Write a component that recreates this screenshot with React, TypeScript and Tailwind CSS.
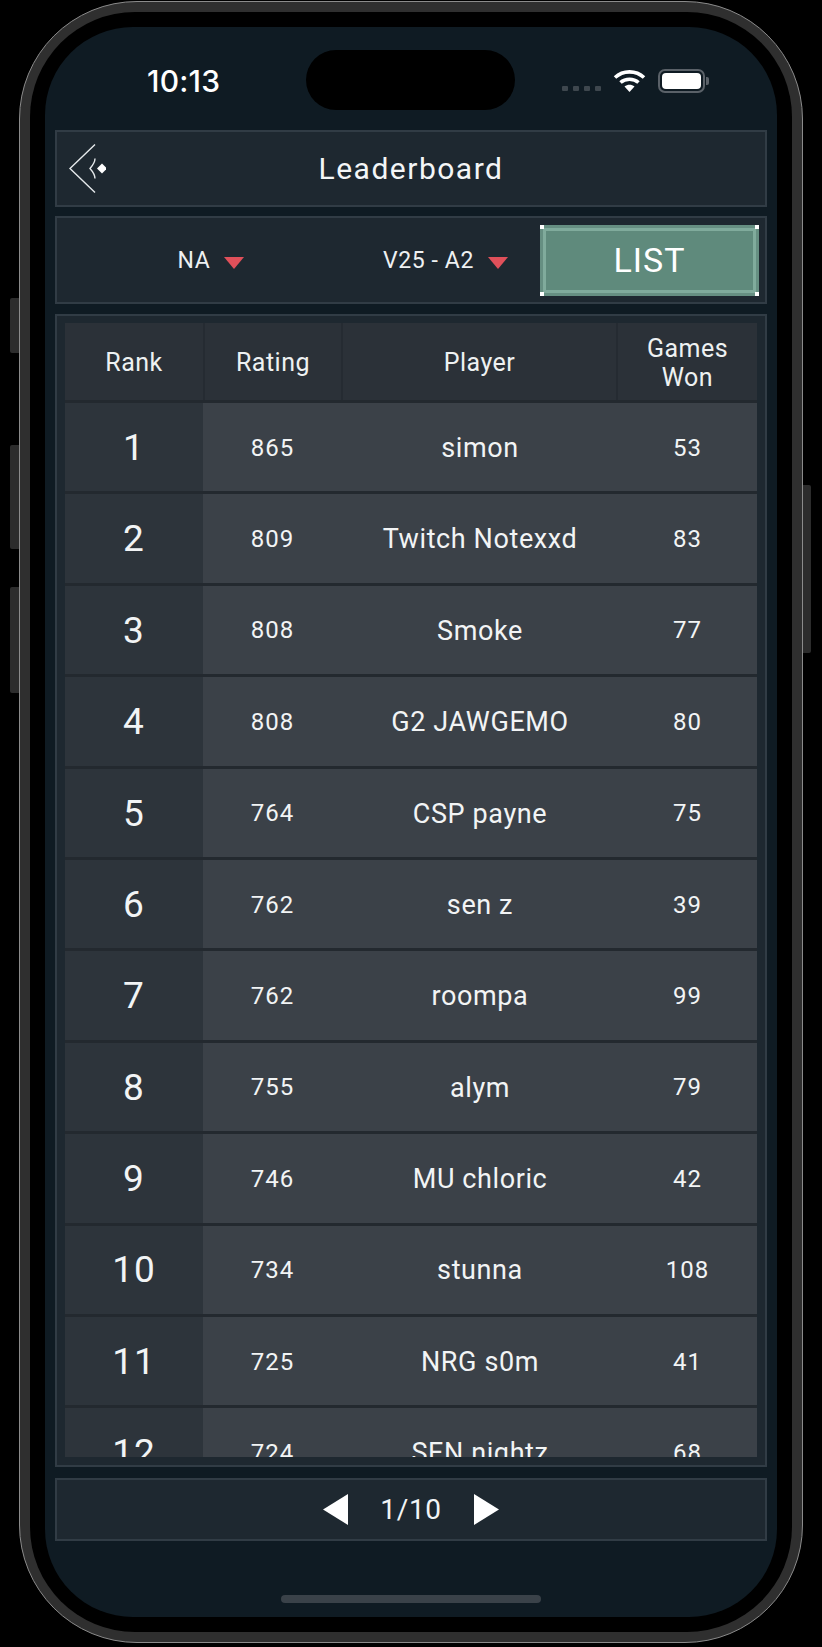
const players = [
  { rank: 1, rating: 865, name: "simon", won: 53 },
  { rank: 2, rating: 809, name: "Twitch Notexxd", won: 83 },
  { rank: 3, rating: 808, name: "Smoke", won: 77 },
  { rank: 4, rating: 808, name: "G2 JAWGEMO", won: 80 },
  { rank: 5, rating: 764, name: "CSP payne", won: 75 },
  { rank: 6, rating: 762, name: "sen z", won: 39 },
  { rank: 7, rating: 762, name: "roompa", won: 99 },
  { rank: 8, rating: 755, name: "alym", won: 79 },
  { rank: 9, rating: 746, name: "MU chloric", won: 42 },
  { rank: 10, rating: 734, name: "stunna", won: 108 },
  { rank: 11, rating: 725, name: "NRG s0m", won: 41 },
  { rank: 12, rating: 724, name: "SEN nightz", won: 68 },
];

const din = "font-['Roboto',sans-serif]";

function Caret() {
  return (
    <svg width="20" height="12" viewBox="0 0 20 12" className="mt-[3px] shrink-0">
      <path d="M0 0h20L10 12z" fill="#e0505a" />
    </svg>
  );
}

function BackIcon() {
  return (
    <svg width="40" height="52" viewBox="0 0 40 52" fill="none" className="text-[#e4e8ea]">
      <path d="M29 1.5 4 25.5l25 24" stroke="currentColor" strokeWidth="1.4" />
      <path d="M29 15.500c0 4-1.500 6-5 10 3.500 4 5 6 5 10" stroke="currentColor" strokeWidth="1.4" />
      <path d="M36 20.500l5 5-5 5-5-5z" fill="#fff" />
    </svg>
  );
}

function StatusIcons() {
  return (
    <div className="flex items-center">
      <div className="mt-[14px] mr-[12px] flex gap-[5px]">
        <span className="h-[5px] w-[6px] rounded-[1px] bg-[#3e474e]" />
        <span className="h-[5px] w-[6px] rounded-[1px] bg-[#3e474e]" />
        <span className="h-[5px] w-[6px] rounded-[1px] bg-[#3e474e]" />
        <span className="h-[5px] w-[6px] rounded-[1px] bg-[#3e474e]" />
      </div>
      <svg width="33" height="24" viewBox="0 0 33 24" fill="none" className="mr-[12px]">
        <path d="M2 8.500C10 1 23 1 31 8.500" stroke="#fff" strokeWidth="3.6" />
        <path d="M7.500 13.500c5-4.400 13-4.400 18 0" stroke="#fff" strokeWidth="3.6" />
        <path d="M11.500 17.500 16.500 23l5-5.500c-3-2.500-7-2.500-10 0z" fill="#fff" />
      </svg>
      <div className="mr-[-1px] h-[24px] w-[47px] rounded-[7px] border-2 border-[#5a6168] p-[2px]">
        <div className="h-full w-full rounded-[4px] bg-white" />
      </div>
      <div className="ml-[2px] h-[8px] w-[3px] rounded-r-[2px] bg-[#5a6168]" />
    </div>
  );
}

function HeaderCell({ children }: { children: React.ReactNode }) {
  return (
    <div className="flex items-center justify-center bg-[#2b3138] pt-[2px] text-center text-[25px] leading-[29px] tracking-[0.5px] text-[#eef1f2]">
      <div>{children}</div>
    </div>
  );
}

function Corner({ className }: { className: string }) {
  return <span className={`absolute h-[4px] w-[4px] bg-white ${className}`} />;
}

export default function App() {
  return (
    <div className={`relative h-[1647px] w-[822px] bg-black pt-[1px] pl-[19px] ${din}`}>
      {/* Side buttons */}
      <div className="absolute top-[298px] left-[10px] h-[55px] w-[9px] rounded-l-[2px] bg-[#2c2c2c]" />
      <div className="absolute top-[445px] left-[10px] h-[104px] w-[9px] rounded-l-[2px] bg-[#2c2c2c]" />
      <div className="absolute top-[587px] left-[10px] h-[106px] w-[9px] rounded-l-[2px] bg-[#2c2c2c]" />
      <div className="absolute top-[485px] left-[803px] h-[168px] w-[8px] rounded-r-[2px] bg-[#2c2c2c]" />

      {/* Phone body */}
      <div className="h-[1642px] w-[784px] rounded-[118px] border border-[#8b8b8b] bg-[#2f2f2f] p-[10px]">
        <div className="h-full w-full rounded-[105px] bg-black p-[15px]">
          <div className="relative flex h-full w-full flex-col overflow-hidden rounded-[88px] bg-[#0f1b23] px-[10px]">
            {/* Status bar */}
            <div className="relative flex h-[103px] shrink-0 items-start justify-between pt-[36px] pr-[58px] pl-[92px]">
              <span className="font-['Inter',sans-serif] text-[30px] leading-[36px] font-medium tracking-[0.2px] text-white">10:13</span>
              <div className="pt-[6px]">
                <StatusIcons />
              </div>
              <div className="absolute top-[23px] left-[251px] h-[60px] w-[209px] rounded-[30px] bg-black" />
            </div>

            {/* Title */}
            <div className="relative flex h-[77px] shrink-0 items-center justify-center border-2 border-[#313c45] bg-[#1e2830]">
              <div className="absolute top-[11px] left-[9px]">
                <BackIcon />
              </div>
              <span className="text-[30px] tracking-[1.5px] text-[#f4f6f7]">Leaderboard</span>
            </div>

            {/* Filters */}
            <div className="mt-[9px] flex h-[88px] shrink-0 items-center border-2 border-[#313c45] bg-[#1e2830] pr-[6px]">
              <div className="flex w-[308px] items-center justify-center gap-[14px] pt-[2px] text-[23px] tracking-[0.6px] text-[#eef1f2]">
                <span>NA</span>
                <Caret />
              </div>
              <div className="flex w-[161px] items-center justify-center gap-[14px] pt-[2px] text-[23px] tracking-[0.6px] text-[#eef1f2]">
                <span className="whitespace-nowrap">V25 - A2</span>
                <Caret />
              </div>
              <div className="relative ml-[14px] h-[71px] flex-1 bg-[#668f82] p-[3px]">
                <div className="flex h-full items-center justify-center border-[3px] border-[#80ab9c] bg-[#5f8a7c] text-[34px] tracking-[1px] text-white">
                  LIST
                </div>
                <Corner className="top-0 left-0" />
                <Corner className="top-0 right-0" />
                <Corner className="bottom-0 left-0" />
                <Corner className="right-0 bottom-0" />
              </div>
            </div>

            {/* Leaderboard table */}
            <div className="mt-[10px] flex h-[1153px] shrink-0 flex-col border-2 border-[#313c45] bg-[#1e2830] px-[8px] pt-[7px] pb-[8px]">
              <div className="grid h-[77px] shrink-0 grid-cols-[138px_136px_273px_1fr] gap-[2px] bg-[#252b32]">
                <HeaderCell>Rank</HeaderCell>
                <HeaderCell>Rating</HeaderCell>
                <HeaderCell>Player</HeaderCell>
                <HeaderCell>
                  Games
                  <br />
                  Won
                </HeaderCell>
              </div>
              <div className="flex min-h-0 flex-1 flex-col gap-[3px] overflow-hidden bg-[#23292f] pt-[3px]">
                {players.map((p) => (
                  <div
                    key={p.rank}
                    className="grid h-[88.4px] shrink-0 grid-cols-[138px_139px_276px_1fr] items-stretch bg-[#3b4148] text-[#f2f4f5]"
                  >
                    <div className="flex items-center justify-center bg-[#2d343b] pt-[1px] text-[37px] tracking-[1px]">{p.rank}</div>
                    <div className="flex items-center justify-center pt-[1px] text-[24px] tracking-[1px]">{p.rating}</div>
                    <div className="flex items-center justify-center pt-[2px] text-[27px] tracking-[0.6px]">{p.name}</div>
                    <div className="flex items-center justify-center pt-[1px] text-[24px] tracking-[1px]">{p.won}</div>
                  </div>
                ))}
              </div>
            </div>

            {/* Pagination */}
            <div className="mt-[11px] flex h-[63px] shrink-0 items-center justify-center gap-[32px] border-2 border-[#313c45] bg-[#1e2830]">
              <svg width="25" height="31" viewBox="0 0 25 31">
                <path d="M25 0v31L0 15.500z" fill="#fff" />
              </svg>
              <span className="text-[28px] tracking-[0.7px] text-[#f2f4f5]">1/10</span>
              <svg width="25" height="31" viewBox="0 0 25 31">
                <path d="M0 0v31l25-15.500z" fill="#fff" />
              </svg>
            </div>

            {/* Home indicator */}
            <div className="mt-[54px] h-[8px] w-[260px] shrink-0 self-center rounded-[4px] bg-[#3a4249]" />
          </div>
        </div>
      </div>
    </div>
  );
}
